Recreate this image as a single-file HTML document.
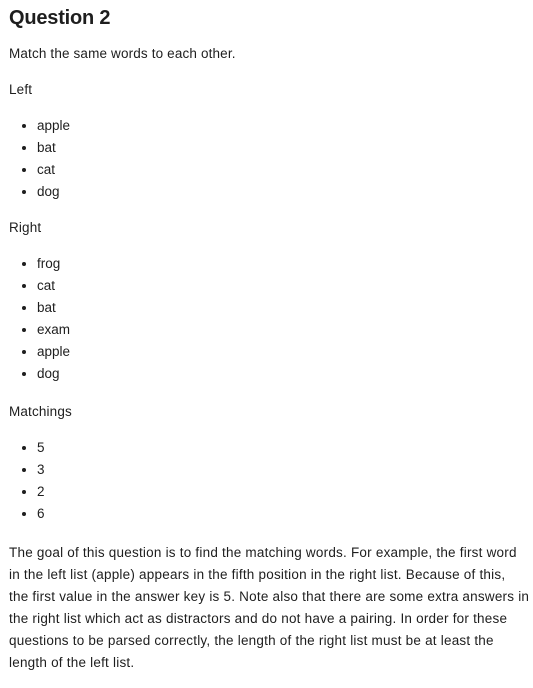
<!DOCTYPE html>
<html><head><meta charset="utf-8"><style>
body{margin:0;padding:0 9px;background:#fff;color:#1e1e1e;font-family:"Liberation Sans",sans-serif;font-size:13.5px;line-height:22px;width:515px}
h2{font-size:20px;font-weight:600;margin:0;padding-top:6px;line-height:24px;letter-spacing:-0.2px}
p{margin:14px 0;letter-spacing:0.15px}
ul{margin:14px 0;padding-left:28px}
li{line-height:22px}
.lp{white-space:nowrap;letter-spacing:0.22px}
</style></head><body>
<h2>Question 2</h2>
<p style="margin-top:13px">Match the same words to each other.</p>
<p>Left</p>
<ul><li>apple</li><li>bat</li><li>cat</li><li>dog</li></ul>
<p>Right</p>
<ul><li>frog</li><li>cat</li><li>bat</li><li>exam</li><li>apple</li><li>dog</li></ul>
<p style="margin-top:16px">Matchings</p>
<ul style="margin-bottom:17px"><li>5</li><li>3</li><li>2</li><li>6</li></ul>
<p class="lp">The goal of this question is to find the matching words. For example, the first word<br>in the left list (apple) appears in the fifth position in the right list. Because of this,<br>the first value in the answer key is 5. Note also that there are some extra answers in<br>the right list which act as distractors and do not have a pairing. In order for these<br>questions to be parsed correctly, the length of the right list must be at least the<br>length of the left list.</p>
</body></html>
